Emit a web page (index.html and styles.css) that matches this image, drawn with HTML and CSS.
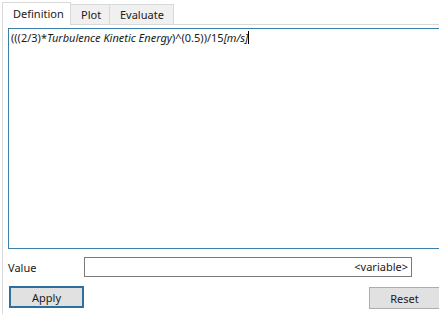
FILE: index.html
```html
<!DOCTYPE html>
<html lang="en">
<head>
    <meta charset="UTF-8">
    <title>Expression</title>
    <link rel="stylesheet" href="styles.css">
</head>
<body>
    <div class="panel">
        <div class="tabs">
            <div class="tab active">Definition</div>
            <div class="tab">Plot</div>
            <div class="tab">Evaluate</div>
        </div>
        <div class="pane">
            <div class="editor">(((2/3)*<i>Turbulence Kinetic Energy</i>)^(0.5))/15<i>[m/s]</i><span class="caret"></span></div>
            <div class="value-row">
                <span class="label">Value</span>
                <div class="value-box">&lt;variable&gt;</div>
            </div>
            <div class="buttons">
                <button class="apply">Apply</button>
                <button class="reset">Reset</button>
            </div>
        </div>
    </div>
</body>
</html>
```

FILE: styles.css
```css
body {
    margin: 0;
    background-color: #fff;
    font-family: "Noto Sans", "Open Sans", sans-serif;
    font-size: 11px;
    color: #1a1a1a;
    width: 439px;
    height: 314px;
    overflow: hidden;
}

.panel {
    padding: 2px 0 0 2px;
}

.tabs {
    display: flex;
    align-items: flex-end;
    height: 22px;
}

.tab {
    height: 20px;
    line-height: 19px;
    padding: 0 10px;
    background-color: #f0f0f0;
    border: 1px solid #d9d9d9;
    border-bottom: none;
    border-left: none;
    box-sizing: border-box;
}

.tab:nth-child(2) {
    width: 39px;
}

.tab:nth-child(3) {
    width: 64px;
}

.tab.active {
    height: 23px;
    line-height: 22px;
    background-color: #fff;
    border-left: 1px solid #d9d9d9;
    padding: 0 0 0 10px;
    margin-bottom: -1px;
    width: 69px;
}

.pane {
    border-top: 1px solid #d9d9d9;
    border-left: 1px solid #d9d9d9;
    padding: 3px 0 0 5px;
    height: 300px;
}

.editor {
    height: 219px;
    border: 1px solid #3a7fae;
    border-right: none;
    padding: 0 2px;
    line-height: 18px;
    white-space: nowrap;
}

.editor i {
    font-style: italic;
}

.caret {
    display: inline-block;
    width: 1px;
    height: 13px;
    background-color: #000;
    vertical-align: -2px;
}

.value-row {
    display: flex;
    align-items: center;
    margin-top: 8px;
    height: 20px;
}

.label {
    width: 76px;
}

.value-box {
    width: 328px;
    height: 20px;
    line-height: 18px;
    box-sizing: border-box;
    border: 1px solid #7a7a7a;
    text-align: right;
    padding-right: 3px;
}

.buttons {
    display: flex;
    justify-content: space-between;
    margin-top: 9px;
}

.buttons button {
    font-family: inherit;
    font-size: 11px;
    color: #1a1a1a;
    background-color: #e1e1e1;
    box-sizing: border-box;
    height: 22px;
    padding: 0;
}

.apply {
    width: 75px;
    margin-left: 1px;
    border: 2px solid #2f6f9f;
}

.reset {
    width: 70px;
    border: 1px solid #adadad;
    border-right: none;
    height: 21px;
    margin-top: 1px;
}
```
